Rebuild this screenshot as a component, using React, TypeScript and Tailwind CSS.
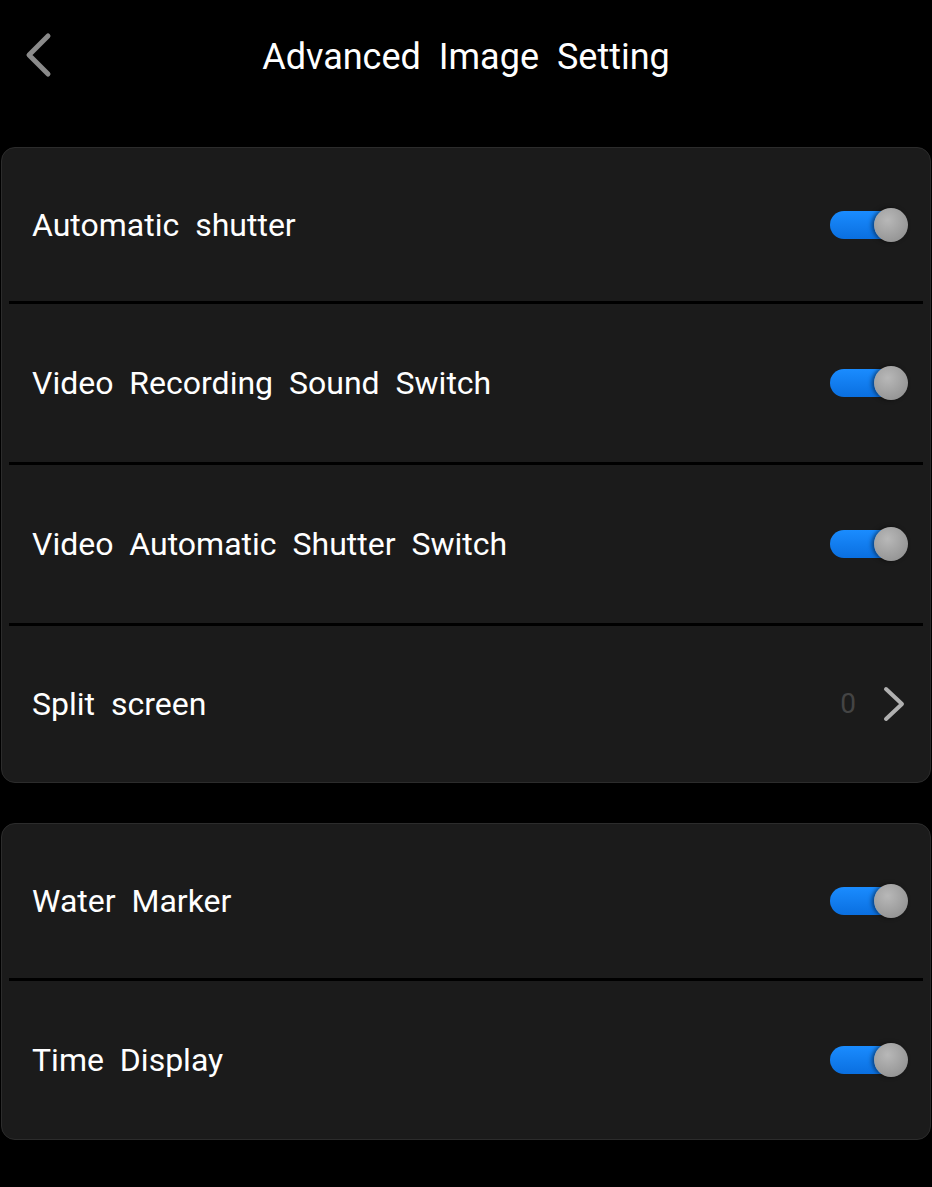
import React from "react";

const font = { fontFamily: "Roboto, 'Noto Sans', sans-serif" };

function Toggle() {
  return (
    <div className="relative w-[80px] h-[34px] flex items-center">
      <div className="absolute left-[2px] top-[3px] w-[66px] h-[28px] rounded-full bg-gradient-to-b from-[#1a8cff] to-[#0a6fe0]" />
      <div className="absolute right-0 top-0 w-[34px] h-[34px] rounded-full bg-[radial-gradient(circle_at_40%_35%,#b8b8b8,#8a8a8a)] shadow-[-2px_0_4px_rgba(0,0,0,0.5)]" />
    </div>
  );
}

function Row({ label, right, last, h }: { label: string; right: React.ReactNode; last?: boolean; h: string }) {
  return (
    <div className="flex flex-col">
      <div className={`flex items-center justify-between pl-[30px] pr-[22px] ${h}`}>
        <span className="text-white text-[32px] [word-spacing:8px]" style={font}>
          {label}
        </span>
        {right}
      </div>
      {!last && <div className="mx-[7px] h-[3px] bg-black" />}
    </div>
  );
}

function Chevron() {
  return (
    <div className="flex items-center gap-[24px]">
      <span className="text-[#444] text-[28px]" style={font}>0</span>
      <svg width="28" height="38" viewBox="0 0 28 38">
        <path d="M6 4 L22 19 L6 34" fill="none" stroke="#b0b0b0" strokeWidth="4" strokeLinecap="round" strokeLinejoin="round" />
      </svg>
    </div>
  );
}

export default function App() {
  return (
    <div className="w-[932px] h-[1187px] bg-black flex flex-col">
      <div className="relative h-[147px] flex items-start justify-center pt-[30px]">
        <svg className="absolute left-[22px] top-[32px]" width="32" height="46" viewBox="0 0 32 46">
          <path d="M26 4 L7 23 L26 42" fill="none" stroke="#8a8a8a" strokeWidth="5" strokeLinecap="round" strokeLinejoin="round" />
        </svg>
        <span className="text-white text-[36px] [word-spacing:9px]" style={font}>
          Advanced Image Setting
        </span>
      </div>
      <div className="mx-[1px] rounded-[14px] bg-[#1b1b1b] border border-[#2c2c2c] flex flex-col">
        <Row h="h-[153px]" label="Automatic shutter" right={<Toggle />} />
        <Row h="h-[158px]" label="Video Recording Sound Switch" right={<Toggle />} />
        <Row h="h-[158px]" label="Video Automatic Shutter Switch" right={<Toggle />} />
        <Row h="h-[156px]" label="Split screen" right={<Chevron />} last />
      </div>
      <div className="mt-[40px] mx-[1px] rounded-[14px] bg-[#1b1b1b] border border-[#2c2c2c] flex flex-col">
        <Row h="h-[154px]" label="Water Marker" right={<Toggle />} />
        <Row h="h-[158px]" label="Time Display" right={<Toggle />} last />
      </div>
    </div>
  );
}
